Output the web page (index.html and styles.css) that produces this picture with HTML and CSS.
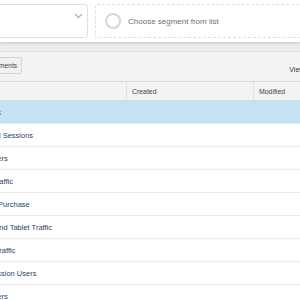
FILE: index.html
```html
<!DOCTYPE html>
<html lang="en">
<head>
    <meta charset="UTF-8">
    <title>Segments</title>
    <link rel="stylesheet" href="styles.css">
</head>
<body>
    <div class="top">
        <div class="select">
            <svg class="chevron" width="9" height="6" viewBox="0 0 9 6"><path d="M1 1 L4.5 4.5 L8 1" fill="none" stroke="#b5b5b5" stroke-width="1.4"/></svg>
        </div>
        <div class="pick">
            <span class="ring"></span>
            <span class="pick-text">Choose segment from list</span>
        </div>
    </div>

    <div class="band"></div>

    <div class="toolbar">
        <button class="btn">Share segments</button>
        <span class="view">View segments in:</span>
    </div>

    <div class="table">
        <div class="row head">
            <div class="cell name"></div>
            <div class="cell">Created</div>
            <div class="cell">Modified</div>
        </div>
        <div class="row selected"><div class="cell name">All Users</div><div class="cell"></div><div class="cell"></div></div>
        <div class="row"><div class="cell name">Bounced Sessions</div><div class="cell"></div><div class="cell"></div></div>
        <div class="row"><div class="cell name">Converters</div><div class="cell"></div><div class="cell"></div></div>
        <div class="row"><div class="cell name">Direct Traffic</div><div class="cell"></div><div class="cell"></div></div>
        <div class="row"><div class="cell name">Made a Purchase</div><div class="cell"></div><div class="cell"></div></div>
        <div class="row"><div class="cell name">Mobile and Tablet Traffic</div><div class="cell"></div><div class="cell"></div></div>
        <div class="row"><div class="cell name">Mobile Traffic</div><div class="cell"></div><div class="cell"></div></div>
        <div class="row"><div class="cell name">Multi-session Users</div><div class="cell"></div><div class="cell"></div></div>
        <div class="row"><div class="cell name">New Users</div><div class="cell"></div><div class="cell"></div></div>
    </div>
</body>
</html>
```

FILE: styles.css
```css
body {
    margin: 0;
    width: 300px;
    height: 300px;
    overflow: hidden;
    background-color: #fff;
    font-family: "Liberation Sans", Arial, sans-serif;
    color: #333;
}

.top {
    height: 34px;
    padding: 4px 0;
    display: flex;
    gap: 7px;
    background-color: #fff;
    position: relative;
    z-index: 1;
    box-shadow: 0 1px 3px rgba(0, 0, 0, 0.18);
}

.select {
    width: 188px;
    margin-left: -100px;
    border: 1px solid #e0e0e0;
    border-radius: 3px;
    display: flex;
    justify-content: flex-end;
    align-items: flex-start;
    padding: 8px 4px 0 0;
    box-sizing: border-box;
}

.pick {
    flex: 1;
    margin-right: -30px;
    border: 1px dashed #dedede;
    border-radius: 2px;
    display: flex;
    align-items: center;
    padding-left: 9px;
    gap: 7px;
}

.ring {
    width: 12px;
    height: 12px;
    border: 2.5px solid #d6d6d6;
    border-radius: 50%;
}

.pick-text {
    font-size: 8px;
    color: #707070;
}

.band {
    height: 9px;
    background-color: #ececec;
    border-bottom: 1px solid #dcdcdc;
}

.toolbar {
    height: 29px;
    background-color: #f3f3f3;
    display: flex;
    align-items: center;
    justify-content: space-between;
    padding-top: 1px;
    box-sizing: border-box;
}

.btn {
    margin-left: -37px;
    height: 17px;
    padding: 0 4px 0 5px;
    border: 1px solid #d4d4d4;
    border-radius: 2px;
    background-color: #f0f0f0;
    font-family: "Liberation Sans", Arial, sans-serif;
    font-size: 6.6px;
    color: #444;
    margin-bottom: 4px;
}

.view {
    font-size: 7px;
    color: #333;
    margin-right: -46px;
    margin-top: 4px;
}

.table {
    margin-left: -35px;
    border-top: 1px solid #dcdcdc;
}

.row {
    display: grid;
    grid-template-columns: 161px 127px 80px;
    height: 22px;
    border-bottom: 1px solid #ebebeb;
    font-size: 7.5px;
    color: #2c4366;
}

.row.head {
    height: 18px;
    background-color: #f3f3f3;
    border-bottom: 1px solid #dcdcdc;
    font-size: 6.9px;
    color: #444;
}

.row.head .cell + .cell {
    border-left: 1px solid #e0e0e0;
    padding-left: 5px;
}

.row.selected {
    background-color: #c4e2f2;
    color: #2d5c92;
}

.cell {
    display: flex;
    align-items: center;
    padding-left: 6px;
    white-space: nowrap;
    overflow: hidden;
}
```
